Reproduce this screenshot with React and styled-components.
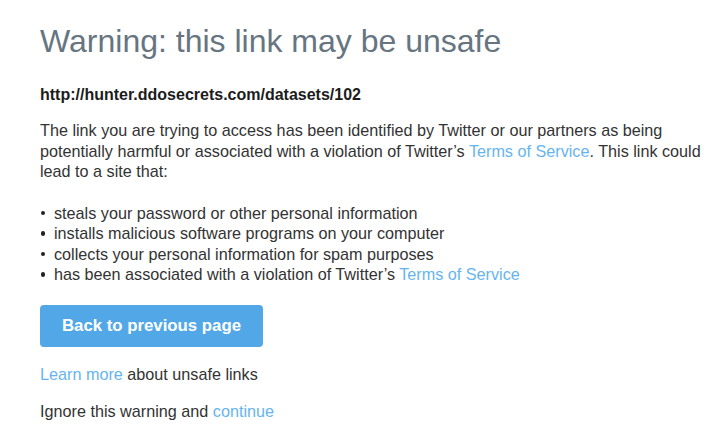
import styled, { createGlobalStyle } from "styled-components";

const GlobalStyle = createGlobalStyle`
    body {
        margin: 0;
        background: #fff;
        font-family: "Liberation Sans", Arial, sans-serif;
    }
`;

const App = () => {
    return (
        <>
            <GlobalStyle />
            <Page>
                <Title>Warning: this link may be unsafe</Title>
                <Url>http://hunter.ddosecrets.com/datasets/102</Url>
                <Text>
                    The link you are trying to access has been identified by Twitter or our partners as being
                    potentially harmful or associated with a violation of Twitter’s <Link href="#">Terms of Service</Link>. This link could
                    lead to a site that:
                </Text>
                <List>
                    <Item><span>steals your password or other personal information</span></Item>
                    <Item><span>installs malicious software programs on your computer</span></Item>
                    <Item><span>collects your personal information for spam purposes</span></Item>
                    <Item><span>has been associated with a violation of Twitter’s <Link href="#">Terms of Service</Link></span></Item>
                </List>
                <BackButton>Back to previous page</BackButton>
                <Note $gap={17.5}><Link href="#">Learn more</Link> about unsafe links</Note>
                <Note $gap={15.5}>Ignore this warning and <Link href="#">continue</Link></Note>
            </Page>
        </>
    );
};

const Page = styled.div`
    display: flex;
    flex-direction: column;
    align-items: flex-start;
    padding: 23px 0 0 40px;
    width: 680px;
    color: #333;
`;

const Title = styled.h1`
    margin: 0;
    font-size: 32px;
    line-height: 36px;
    font-weight: normal;
    color: #66757f;
`;

const Url = styled.p`
    margin: 25.5px 0 0;
    font-size: 16px;
    line-height: 20px;
    font-weight: bold;
    color: #1c1c1c;
`;

const Text = styled.p`
    margin: 15.7px 0 0;
    max-width: 672px;
    font-size: 16.2px;
    line-height: 20.6px;
    color: #333;
`;

const Link = styled.a`
    color: #66b4ef;
    text-decoration: none;
`;

const List = styled.ul`
    list-style: none;
    margin: 20.6px 0 0;
    padding: 0;
    font-size: 16.2px;
    line-height: 20.6px;
`;

const Item = styled.li`
    display: flex;
    align-items: center;
    gap: 9px;

    &::before {
        content: "";
        width: 4.5px;
        height: 4.5px;
        border-radius: 50%;
        background: #222;
        margin-left: 0.5px;
        flex-shrink: 0;
    }
`;

const BackButton = styled.button`
    margin-top: 20px;
    width: 223px;
    height: 42px;
    border: none;
    border-radius: 4px;
    background: #52a7e7;
    color: #fff;
    font-family: "Liberation Sans", Arial, sans-serif;
    font-size: 16.8px;
    font-weight: bold;
    cursor: pointer;
`;

const Note = styled.p`
    margin: ${(p) => p.$gap}px 0 0;
    font-size: 16.2px;
    line-height: 20.6px;
    color: #333;
`;

export default App;
